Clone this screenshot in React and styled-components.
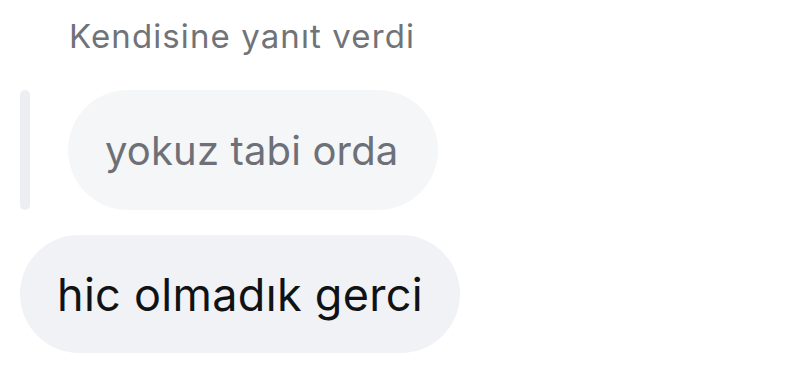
import React from 'react';
import styled, { createGlobalStyle } from 'styled-components';

const GlobalStyle = createGlobalStyle`
    html, body {
        margin: 0;
        padding: 0;
        background: #fff;
    }
    body {
        font-family: Inter, "Liberation Sans", Arial, sans-serif;
        -webkit-font-smoothing: antialiased;
    }
`;

function App() {
    return (
        <>
            <GlobalStyle />
            <Thread>
                <ReplyLabel>Kendisine yanıt verdi</ReplyLabel>
                <QuoteRow>
                    <QuoteBar />
                    <Bubble $quoted>yokuz tabi orda</Bubble>
                </QuoteRow>
                <Bubble>hic olmadık gerci</Bubble>
            </Thread>
        </>
    );
}

const Thread = styled.div`
    display: flex;
    flex-direction: column;
    align-items: flex-start;
    padding: 12px 0 0 20px;
`;

const ReplyLabel = styled.div`
    margin-left: 49px;
    font-size: 33px;
    letter-spacing: 1.1px;
    line-height: 48px;
    color: #707378;
    margin-bottom: 30px;
`;

const QuoteRow = styled.div`
    display: flex;
    align-items: stretch;
    gap: 38px;
    margin-bottom: 25px;
`;

const QuoteBar = styled.div`
    width: 10px;
    border-radius: 5px;
    background: #eceef2;
`;

const Bubble = styled.div`
    display: flex;
    align-items: center;
    height: ${p => (p.$quoted ? '120px' : '118px')};
    padding: ${p => (p.$quoted ? '0 40px 0 37px' : '0 37px 0 37px')};
    border-radius: 60px;
    background: ${p => (p.$quoted ? '#f5f6f7' : '#f0f2f5')};
    color: ${p => (p.$quoted ? '#6d7076' : '#111214')};
    font-size: ${p => (p.$quoted ? '40px' : '45px')};
    letter-spacing: ${p => (p.$quoted ? '0.15px' : '0.3px')};
    white-space: nowrap;
`;

export default App;
